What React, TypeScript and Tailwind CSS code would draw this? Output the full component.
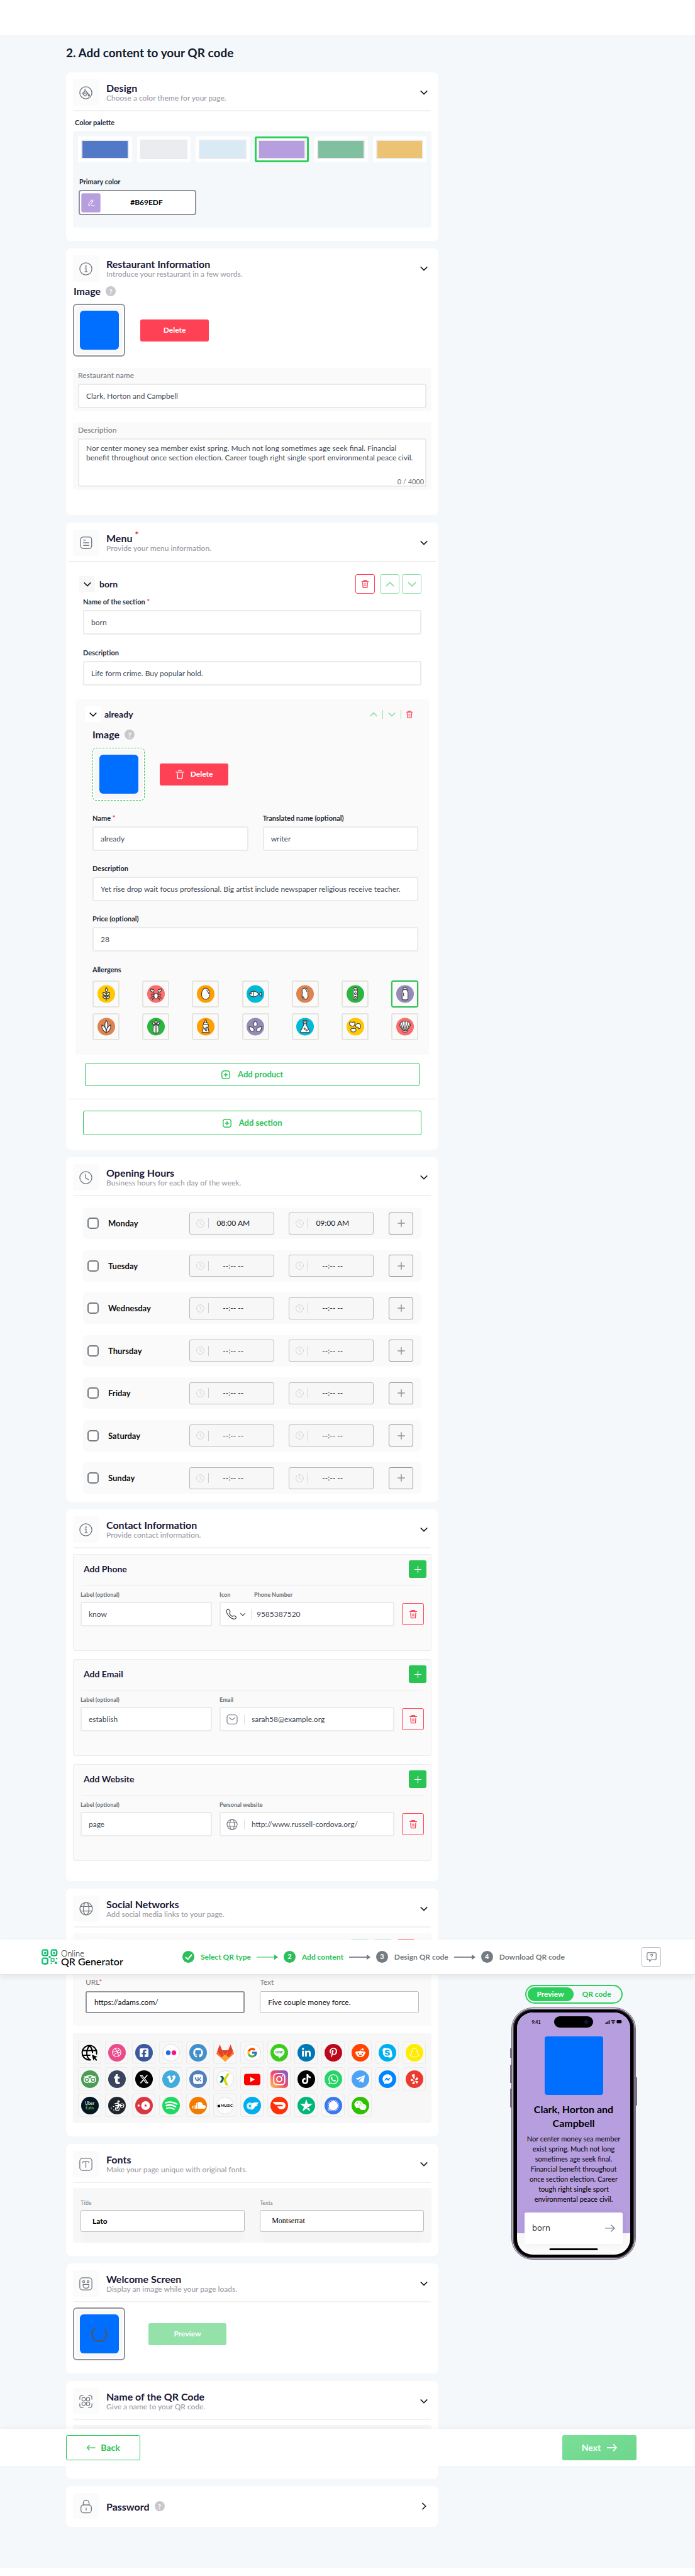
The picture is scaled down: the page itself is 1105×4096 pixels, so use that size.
import React from 'react';
import {
  FaApple, FaFacebookMessenger, FaGithub, FaInstagram, FaLinkedinIn, FaPinterestP, FaRedditAlien, FaSkype,
  FaSnapchat, FaSquareFacebook, FaTiktok, FaTumblr, FaVimeoV, FaVk, FaWeixin, FaWhatsapp, FaXTwitter,
  FaYelp, FaDribbble,
} from 'react-icons/fa6';
import { FaTelegramPlane } from 'react-icons/fa';
import { FcGoogle } from 'react-icons/fc';
import { SiDoordash, SiSignal, SiTripadvisor } from 'react-icons/si';

type Kids = { children?: React.ReactNode };

/* ---------- icons ---------- */

const line = { fill: 'none', stroke: 'currentColor', strokeLinecap: 'round', strokeLinejoin: 'round' } as const;

function Chevron({ dir = 'down', className = '' }: { dir?: 'down' | 'up' | 'right'; className?: string }) {
  const d = dir === 'down' ? 'M2 5l6 6 6-6' : dir === 'up' ? 'M2 11l6-6 6 6' : 'M5 2l6 6-6 6';
  return (
    <svg viewBox="0 0 16 16" className={className} {...line} strokeWidth="1.800" strokeLinecap="butt" strokeLinejoin="miter">
      <path d={d} />
    </svg>
  );
}

function Trash({ className = '' }: { className?: string }) {
  return (
    <svg viewBox="0 0 20 22" className={className} {...line} strokeWidth="2">
      <path d="M2 5h16M6.500 5V2.500h7V5M4 8l1 12h10l1-12M8 11h4M8 15h4" />
    </svg>
  );
}

function ClockIcon({ className = '' }: { className?: string }) {
  return (
    <svg viewBox="0 0 24 24" className={className} {...line} strokeWidth="1.500">
      <circle cx="12" cy="12" r="11" />
      <path d="M11.500 6v6.500l5 3" />
    </svg>
  );
}

function GlobeIcon({ className = '' }: { className?: string }) {
  return (
    <svg viewBox="0 0 24 24" className={className} {...line} strokeWidth="1.500">
      <circle cx="12" cy="12" r="10.800" />
      <path d="M2.500 8h19M2.500 16h19" />
      <ellipse cx="12" cy="12" rx="4.800" ry="10.800" />
    </svg>
  );
}

function InfoIcon({ className = '' }: { className?: string }) {
  return (
    <svg viewBox="0 0 24 24" className={className} {...line} strokeWidth="1.500">
      <circle cx="12" cy="12" r="11" />
      <path d="M10.500 10.500H12.500v6.500M10.500 17h4" />
      <circle cx="12.200" cy="7" r=".6" fill="currentColor" />
    </svg>
  );
}

function DesignIcon({ className = '' }: { className?: string }) {
  return (
    <svg viewBox="0 0 24 24" className={className} {...line} strokeWidth="1.600">
      <circle cx="12" cy="12" r="11" />
      <path d="M10.500 5.500v3M11 8l5 5-4.500 4.500a1 1 0 0 1-1.500 0L6.500 14a1 1 0 0 1 0-1.500zM6.500 12.700h9.500" />
      <path d="M17.500 14.500c1.500 2 1.500 3.500 0 3.500s-1.500-1.500 0-3.500z" fill="currentColor" />
    </svg>
  );
}

function MenuIcon({ className = '' }: { className?: string }) {
  return (
    <svg viewBox="0 0 24 24" className={className} {...line} strokeWidth="1.700">
      <rect x="1.500" y="1" width="21" height="22" rx="5" />
      <path d="M7 7h4M7 12h10M7 17h10" />
    </svg>
  );
}

function FontIcon({ className = '' }: { className?: string }) {
  return (
    <svg viewBox="0 0 24 24" className={className} {...line} strokeWidth="1.500">
      <rect x="1" y="1" width="22" height="22" rx="5" />
      <path d="M6.500 9c0-2 1-2.200 2-2.200h7c1.200 0 2 .4 2 2.200M12 7v10.500" />
    </svg>
  );
}

function SmileIcon({ className = '' }: { className?: string }) {
  return (
    <svg viewBox="0 0 24 24" className={className} {...line} strokeWidth="1.500">
      <rect x="1" y="1" width="22" height="22" rx="5" />
      <circle cx="8" cy="8" r="1.800" />
      <circle cx="16" cy="8" r="1.800" />
      <path d="M7 13h10.500v2c0 3-2 4.800-5.200 4.800S7 18 7 15z" />
    </svg>
  );
}

function QrScanIcon({ className = '' }: { className?: string }) {
  return (
    <svg viewBox="0 0 24 24" className={className} {...line} strokeWidth="1.500">
      <path d="M1 8V5q0-4 4-4h2M17 1h2q4 0 4 4v3M23 16v3q0 4-4 4h-2M7 23H5q-4 0-4-4v-3" />
      <rect x="5" y="5" width="6" height="6" rx="2" />
      <rect x="13" y="5" width="6" height="6" rx="2" />
      <rect x="5" y="13" width="6" height="6" rx="2" />
      <rect x="13" y="13" width="6" height="6" rx="2" />
    </svg>
  );
}

function LockIcon({ className = '' }: { className?: string }) {
  return (
    <svg viewBox="0 0 24 26" className={className} {...line} strokeWidth="1.600">
      <rect x="2" y="10" width="20" height="15" rx="5" />
      <path d="M6.500 10V6.500a5.500 5.500 0 0 1 11 0V10M12 16v4" />
    </svg>
  );
}

function Help() {
  return (
    <span className="inline-flex h-4 w-4 items-center justify-center rounded-full bg-[#c9c8ce] text-[11px] leading-none text-white">?</span>
  );
}

/* ---------- building blocks ---------- */

function Card({ children, className = '' }: Kids & { className?: string }) {
  return <section className={'rounded-lg bg-white px-[11px] ' + className}>{children}</section>;
}

function CardHead({ icon, title, sub, rule = 'soft', required, extra }: {
  icon: React.ReactNode; title: string; sub?: string; rule?: 'soft' | 'wide' | 'none'; required?: boolean; extra?: React.ReactNode;
}) {
  return (
    <>
      <header className="flex items-center pt-[11px]">
        <span className="flex h-[42px] w-[41px] shrink-0 items-center justify-center rounded bg-[#fbfbfc] text-[#757b82]">{icon}</span>
        <div className="ml-3 min-w-0 flex-1">
          <h2 className="flex items-center gap-2 text-[16px] leading-[17px] font-bold text-[#1c1836]">
            <span>
              {title}
              {required && <sup className="ml-1 text-[14px] leading-none text-[#e0162e]">*</sup>}
            </span>
            {extra}
          </h2>
          {sub && <p className="text-[12px] leading-4 font-medium text-[#9d9ba6]">{sub}</p>}
        </div>
        <button type="button" aria-label={'Toggle ' + title} className="flex h-6 w-6 items-center justify-center text-[#15142b]">
          <Chevron dir={sub ? 'down' : 'right'} className="h-3.5 w-3.5" />
        </button>
      </header>
      {rule === 'soft' && <div className="mx-px mt-[7px] h-0.5 bg-[#f1f1f2]" />}
      {rule === 'wide' && <div className="-mx-[7px] mt-2 h-px bg-[#e6e6e6]" />}
    </>
  );
}

const inputBox = 'block w-full min-w-0 rounded-[3px] border-2 border-[#ebebeb] bg-white px-[11px] text-[12px] text-[#444b57] outline-none';

function Field({ id, label, value, required, className = '' }: { id: string; label: string; value: string; required?: boolean; className?: string }) {
  return (
    <div className={'min-w-0 ' + className}>
      <label htmlFor={id} className="block text-[11px] leading-4 font-bold text-[#232a36]">
        {label}
        {required && <span className="text-[#ef3d4e]"> *</span>}
      </label>
      <input id={id} defaultValue={value} className={inputBox + ' mt-[5px] h-[39px]'} />
    </div>
  );
}

function ImageHead() {
  return (
    <div className="flex h-5 items-center gap-2 text-[16px] font-bold text-[#1c1836]">
      <h3>Image</h3>
      <Help />
    </div>
  );
}

function ImageBox({ dashed, children }: Kids & { dashed?: boolean }) {
  return (
    <div
      className={
        'flex h-[84px] w-[83px] items-center justify-center rounded-md bg-white p-0.5 ' +
        (dashed ? 'border border-dashed border-[#2ac455]' : 'border-2 border-[#93939b]')
      }
    >
      <div className="flex h-full w-full items-center justify-center rounded bg-[#f7f7f7]">
        <div className="flex h-[62px] w-[62px] items-center justify-center rounded-md bg-[#006eff]">{children}</div>
      </div>
    </div>
  );
}

/* ---------- design ---------- */

const swatches: [string, string][] = [
  ['Blue', 'bg-[#5279c7]'], ['Grey', 'bg-[#ebecf0]'], ['Sky', 'bg-[#d9eaf4]'],
  ['Purple', 'bg-[#b69edf]'], ['Green', 'bg-[#80c0a1]'], ['Amber', 'bg-[#ebc373]'],
];

function DesignCard() {
  return (
    <Card className="pb-[21px]">
      <CardHead icon={<DesignIcon className="h-[21px] w-[21px]" />} title="Design" sub="Choose a color theme for your page." />
      <h3 className="mt-2.5 ml-[3px] text-[11px] leading-4 font-bold text-[#232a36]">Color palette</h3>
      <div className="mt-[5px] rounded bg-[#f4f8fb] px-2 pt-[9px] pb-5">
        <div className="grid grid-cols-6 gap-2">
          {swatches.map(([name, color]) => (
            <button
              key={name}
              type="button"
              aria-label={name + ' palette'}
              aria-pressed={name === 'Purple'}
              className={'h-[41px] rounded-[3px] border-3 bg-white p-0.5 ' + (name === 'Purple' ? 'border-[#2bcf59]' : 'border-white')}
            >
              <span className={'block h-full w-full border-2 border-[#ebebec] ' + color} />
            </button>
          ))}
        </div>
        <label htmlFor="primary" className="mt-[23px] ml-0.5 block text-[11px] leading-4 font-bold text-[#232a36]">Primary color</label>
        <div className="mt-[5px] ml-px flex h-10 w-[187px] items-center rounded border-2 border-[#93939b] bg-white px-0.5">
          <span className="flex h-[31px] w-[31px] shrink-0 items-center justify-center rounded-[3px] border border-[#cbbfe0] bg-[#b69edf] text-white">
            <svg viewBox="0 0 16 16" className="h-3 w-3" {...line} strokeWidth="1.300">
              <path d="M9.500 2.500l3 2L6 13l-3.500 1.500.3-3.700zM8 4.500l3 2M8.500 14.500H15" />
            </svg>
          </span>
          <input id="primary" defaultValue="#B69EDF" className="w-full min-w-0 bg-transparent pr-[2px] text-center text-[12px] font-bold text-black outline-none" />
        </div>
      </div>
    </Card>
  );
}

/* ---------- restaurant ---------- */

function RestaurantCard() {
  return (
    <Card className="pb-10">
      <CardHead rule="none" icon={<InfoIcon className="h-[21px] w-[21px]" />} title="Restaurant Information" sub="Introduce your restaurant in a few words." />
      <div className="mt-[5px] ml-px"><ImageHead /></div>
      <div className="mt-2.5 flex items-center gap-6">
        <ImageBox />
        <button type="button" className="h-[35px] w-[109px] rounded-[3px] bg-[#ff4155] text-[12px] font-bold text-white">Delete</button>
      </div>
      <div className="mt-[18px] rounded bg-[#fafafa] px-2 pt-1 pb-[5px]">
        <label htmlFor="rname" className="block text-[12px] leading-4 font-medium text-[#7c8188]">Restaurant name</label>
        <input id="rname" defaultValue="Clark, Horton and Campbell" className={inputBox + ' mt-[5px] h-[39px]'} />
      </div>
      <div className="relative mt-[18px] rounded bg-[#fafafa] px-2 pt-1 pb-[5px]">
        <label htmlFor="rdesc" className="block text-[12px] leading-4 font-medium text-[#7c8188]">Description</label>
        <textarea
          id="rdesc"
          defaultValue="Nor center money sea member exist spring. Much not long sometimes age seek final. Financial benefit throughout once section election. Career tough right single sport environmental peace civil."
          className={inputBox + ' mt-[5px] h-[77px] resize-none py-1.5 leading-[15px]'}
        />
        <span className="absolute right-3 bottom-[7px] text-[11px] leading-3 text-[#6d6d72]">0 / 4000</span>
      </div>
    </Card>
  );
}

/* ---------- menu ---------- */

const ink = { fill: '#fff', stroke: '#3c3c3b', strokeWidth: 1.4, strokeLinejoin: 'round', strokeLinecap: 'round' } as const;

const allergens: { name: string; color: string; art: React.ReactNode }[] = [
  { name: 'Gluten', color: '#ffc800', art: <><path d="M18 14v17" /><path d="M18 5c3 3 3 7 0 9-3-2-3-6 0-9zM18 21c0-4-3-6-7-6 0 4 3 6 7 6zM18 21c0-4 3-6 7-6 0 4-3 6-7 6zM18 28c0-4-3-6-7-6 0 4 3 6 7 6zM18 28c0-4 3-6 7-6 0 4-3 6-7 6z" /></> },
  { name: 'Crustaceans', color: '#ff6b6d', art: <><path fill="none" d="M14 20l-5-2-1 3M13.500 23l-5 1-1 3M14 26l-3 2v2M22 20l5-2 1 3M22.500 23l5 1 1 3M22 26l3 2v2M15 18l-4-4M21 18l4-4" /><path d="M11 14c-4 0-5-4-3-7l2 3 3-2c2 3 1 6-2 6zM25 14c4 0 5-4 3-7l-2 3-3-2c-2 3-1 6 2 6zM18 17c4 0 4.500 3 4 6s-2 5-4 5-3.500-2-4-5 0-6 4-6z" /></> },
  { name: 'Eggs', color: '#ff9f00', art: <><path d="M18 6c5 0 8.500 7 8.500 12.500S23 29 18 29s-8.500-4.500-8.500-10.500S13 6 18 6z" /><path fill="none" d="M20 10c2 2 3.500 4 4 7" /></> },
  { name: 'Fish', color: '#00bbd8', art: <><path d="M5 18c4-7 13-8 20 0l5-4v9l-5-5c-7 8-16 7-20 0z" /><path fill="none" d="M13 13c2 3 2 7 0 10" /><circle cx="9.500" cy="17" r="1.300" /></> },
  { name: 'Peanuts', color: '#df8350', art: <><path d="M18 6c5 0 7 4 6 7-1 3-1 4 0 7 1 4-1 9-6 9s-7-5-6-9c1-3 1-4 0-7-1-3 1-7 6-7z" /><path fill="none" d="M19 9c2 0 3 2 2.500 4M14 23c0 2 1 3.500 3 3.500" /></> },
  { name: 'Soy', color: '#2bb63f', art: <><path d="M18 5c4 0 5 3 4 6 1 2 1 3 0 5 1 2 1 3 0 5 1 4 0 9-4 9s-5-5-4-9c-1-2-1-3 0-5-1-2-1-3 0-5-1-3 0-6 4-6z" /><circle cx="18" cy="10" r="2" /><circle cx="18" cy="17.500" r="2" /><circle cx="18" cy="25" r="2" /></> },
  { name: 'Milk', color: '#948bb7', art: <><path d="M14.500 9h7c0 3 2.500 3 2.500 6v12c0 2-1 3-3 3h-6c-2 0-3-1-3-3V15c0-3 2.500-3 2.500-6z" /><rect x="14" y="5.500" width="8" height="3.500" rx="1" /><path fill="none" d="M15 16v6" /></> },
  { name: 'Nuts', color: '#df8350', art: <><path d="M18 5c4 5 4 14 0 21-4-7-4-16 0-21z" /><path d="M9 14c6 3 9 9 9 16-6-2-10-8-9-16zM27 14c-6 3-9 9-9 16 6-2 10-8 9-16z" /></> },
  { name: 'Celery', color: '#2bb63f', art: <><path d="M18 4c3 3 2 6 0 9-2-3-3-6 0-9zM10 8c4 0 6 3 6 6-4 0-6-2-6-6zM26 8c-4 0-6 3-6 6 4 0 6-2 6-6z" /><path d="M13 15h3.500v16c-4 0-5-3-4.500-8zM23 15h-3.500v16c4 0 5-3 4.500-8zM16.500 14h3v17h-3z" /></> },
  { name: 'Mustard', color: '#ff9f00', art: <><path d="M17 4h2l1 6h-4zM13.500 10h9v3h-9zM13 13h10c2 4-1 5 0 8l2 9H11l2-9c1-3-2-4 0-8z" /><circle cx="16" cy="22" r="1.300" /><circle cx="20" cy="20" r="1.300" /><circle cx="19" cy="25" r="1.500" /></> },
  { name: 'Sesame', color: '#948bb7', art: <path d="M18 6c3 3 4 5 4 7 0 3-2 4-4 4s-4-1-4-4c0-2 1-4 4-7zM5 18c5 0 9 2 10 5s0 5-3 5c-4 0-7-5-7-10zM31 18c-5 0-9 2-10 5s0 5 3 5c4 0 7-5 7-10z" /> },
  { name: 'Sulphites', color: '#00bbd8', art: <><path d="M15 8h6v7l6 12c1 2 0 3-1 3H10c-1 0-2-1-1-3l6-12z" /><rect x="14" y="5" width="8" height="3" rx="1" /><path fill="none" d="M15 12h6" /><circle cx="17" cy="22" r="1.300" /><circle cx="21" cy="25" r="1.500" /></> },
  { name: 'Lupin', color: '#ffc800', art: <><path d="M7 8c3 0 4 3 8 0 4 2 2 9-3 9s-8-5-5-9zM20 13c4-3 9-1 9 4 0 4-3 6-5 5 1-3-2-4-4-3-2-1-2-4 0-6zM10 21c3 1 5 1 8 0 3 4 1 8-4 8s-7-4-4-8z" /></> },
  { name: 'Molluscs', color: '#ff6b6d', art: <><path d="M18 7c6-1 11 3 11 8-1 4-4 7-7 10h-8c-3-3-6-6-7-10C7 10 12 6 18 7z" /><path fill="none" d="M18 7v18M12.500 8.500L16 25M23.500 8.500L20 25M8.500 12L14 25M27.500 12L22 25" /><rect x="13.500" y="26" width="9" height="3" rx="1.500" /></> },
];

function MenuCard() {
  return (
    <Card className="pb-[23px]">
      <CardHead rule="wide" required icon={<MenuIcon className="h-5 w-5" />} title="Menu" sub="Provide your menu information." />
      <div className="mx-4 mt-5">
        <div className="-ml-1.5 flex items-center">
          <button type="button" aria-label="Collapse section" className="flex h-[25px] w-[25px] items-center justify-center bg-[#f7f7f7] text-[#15142b]">
            <Chevron className="h-3.5 w-3.5" />
          </button>
          <h3 className="ml-[7px] flex-1 text-[14px] font-bold text-[#1c1836]">born</h3>
          <button type="button" aria-label="Delete section" className="flex h-[31px] w-[31px] items-center justify-center rounded-[3px] border border-[#ff4155] text-[#ff4155]"><Trash className="h-[15px] w-[13px]" /></button>
          <button type="button" aria-label="Move section up" className="ml-2 flex h-[31px] w-[31px] items-center justify-center rounded-[3px] border border-[#92dfa8] text-[#92dfa8]"><Chevron dir="up" className="h-4 w-4" /></button>
          <button type="button" aria-label="Move section down" className="ml-1 flex h-[31px] w-[31px] items-center justify-center rounded-[3px] border border-[#92dfa8] text-[#92dfa8]"><Chevron className="h-4 w-4" /></button>
        </div>
        <Field id="section-name" label="Name of the section" required value="born" className="mt-[5px]" />
        <Field id="section-desc" label="Description" value="Life form crime. Buy popular hold." className="mt-[21px]" />
      </div>
      <div className="mx-1 mt-[22px] rounded bg-[#fafafa] pt-[11px] pr-[17px] pb-[23px] pl-[27px]">
        <div className="-ml-3 flex items-center">
          <button type="button" aria-label="Collapse product" className="flex h-[25px] w-[25px] items-center justify-center bg-white text-[#15142b]">
            <Chevron className="h-3.5 w-3.5" />
          </button>
          <h3 className="ml-1.5 flex-1 text-[14px] leading-5 font-bold text-[#1c1836]">already</h3>
          <div className="mr-2 flex items-center gap-[7px] text-[#92dfa8]">
            <button type="button" aria-label="Move product up"><Chevron dir="up" className="block h-3.5 w-3.5" /></button>
            <span className="h-3.5 w-px bg-[#92dfa8]" />
            <button type="button" aria-label="Move product down"><Chevron className="block h-3.5 w-3.5" /></button>
            <span className="h-3.5 w-px bg-[#92dfa8]" />
            <button type="button" aria-label="Delete product" className="text-[#ff4155]"><Trash className="block h-3.5 w-3" /></button>
          </div>
        </div>
        <div className="mt-2.5"><ImageHead /></div>
        <div className="mt-[11px] flex items-center gap-6">
          <ImageBox dashed />
          <button type="button" className="flex h-[35px] w-[109px] items-center justify-center gap-2.5 rounded-[3px] bg-[#ff4155] text-[12px] font-bold text-white">
            <svg viewBox="0 0 18 20" className="h-[15px] w-[14px]" {...line} strokeWidth="2"><path d="M1 5h16M6 1h6M3.500 8l1 11h9l1-11" /></svg>
            Delete
          </button>
        </div>
        <div className="mt-5 grid grid-cols-2 gap-[23px]">
          <Field id="p-name" label="Name" required value="already" />
          <Field id="p-trans" label="Translated name (optional)" value="writer" />
        </div>
        <Field id="p-desc" label="Description" value="Yet rise drop wait focus professional. Big artist include newspaper religious receive teacher." className="mt-5" />
        <Field id="p-price" label="Price (optional)" value="28" className="mt-5" />
        <h4 className="mt-[21px] text-[11px] leading-4 font-bold text-[#232a36]">Allergens</h4>
        <div className="mt-[9px] grid grid-cols-[repeat(7,43px)] justify-between gap-y-[9px]">
          {allergens.map((a) => (
            <button
              key={a.name}
              type="button"
              aria-label={a.name}
              aria-pressed={a.name === 'Milk'}
              className={'flex h-[43px] w-[43px] items-center justify-center rounded-[3px] border-2 ' + (a.name === 'Milk' ? 'border-[#2ac455] outline-1 outline-[#e5e5de]' : 'border-[#e5e5de]')}
            >
              <svg viewBox="0 0 36 36" className="h-[29px] w-[28px]" {...ink}>
                <circle cx="18" cy="18" r="18" fill={a.color} stroke="none" />
                {a.art}
              </svg>
            </button>
          ))}
        </div>
      </div>
      <AddButton className="mx-[19px] mt-[13px] h-[37px]">Add product</AddButton>
      <div className="-mx-[7px] mt-5 h-px bg-[#e6e6e6]" />
      <AddButton className="mx-4 mt-[18px] h-[39px]">Add section</AddButton>
    </Card>
  );
}

function AddButton({ children, className }: Kids & { className: string }) {
  return (
    <div className={'flex ' + className}>
      <button type="button" className="flex flex-1 items-center justify-center gap-3 rounded-[3px] border border-[#2ac455] text-[13px] font-bold text-[#2ac455]">
        <svg viewBox="0 0 18 18" className="h-3.5 w-3.5" {...line} strokeWidth="1.900"><rect x="1" y="1" width="16" height="16" rx="4.500" /><path d="M9 5.500v7M5.500 9h7" /></svg>
        {children}
      </button>
    </div>
  );
}

/* ---------- hours ---------- */

function TimeBox({ label, value }: { label: string; value?: string }) {
  return (
    <div className="flex h-[35px] w-[135px] items-center rounded-[3px] border border-[#b9b9bd] bg-[#f7f7f8] pl-2.5">
      <ClockIcon className="h-[13px] w-[13px] shrink-0 text-[#cdced2]" />
      <span className="ml-1.5 h-4 w-px shrink-0 bg-[#cfcfd3]" />
      <input aria-label={label} defaultValue={value ?? '--:-- --'} className="w-full min-w-0 bg-transparent pr-[26px] text-center text-[12px] text-[#111] outline-none" />
    </div>
  );
}

function HoursCard() {
  const days = ['Monday', 'Tuesday', 'Wednesday', 'Thursday', 'Friday', 'Saturday', 'Sunday'];
  return (
    <Card className="pb-[13px]">
      <CardHead icon={<ClockIcon className="h-[21px] w-[21px]" />} title="Opening Hours" sub="Business hours for each day of the week." />
      <div className="mx-4 mt-[18px] grid h-[455px] content-between">
        {days.map((day) => (
          <div key={day} className="flex h-[50px] items-center rounded-md bg-[#fafafa] pr-[13px] pl-[7px]">
            <input id={day} type="checkbox" className="h-[18px] w-[18px] appearance-none rounded-[5px] border-2 border-[#757b82] bg-white" />
            <label htmlFor={day} className="ml-[15px] flex-1 text-[13px] leading-4 font-bold text-[#111]">{day}</label>
            <TimeBox label={day + ' opening time'} value={day === 'Monday' ? '08:00 AM' : undefined} />
            <span className="w-[23px]" />
            <TimeBox label={day + ' closing time'} value={day === 'Monday' ? '09:00 AM' : undefined} />
            <button type="button" aria-label={'Add hours for ' + day} className="ml-6 flex h-[35px] w-[39px] items-center justify-center rounded-[3px] border border-[#93939b] bg-[#f7f7f8] text-[#93939b]">
              <svg viewBox="0 0 12 12" className="h-3 w-3" {...line} strokeWidth="1.600"><path d="M6 .8v10.400M.8 6h10.400" /></svg>
            </button>
          </div>
        ))}
      </div>
    </Card>
  );
}

/* ---------- contact ---------- */

function ContactPanel({ id, title, label, valueLabel, value, icon, phone, className }: {
  id: string; title: string; label: string; valueLabel: string; value: string; icon: React.ReactNode; phone?: boolean; className: string;
}) {
  const small = 'block text-[9px] leading-[14px] font-black text-[#757b82]';
  return (
    <div className={'h-[154px] rounded-[3px] border border-[#ececec] bg-[#fafafa] pt-[9px] pr-[7px] pl-3 ' + className}>
      <div className="flex items-center pl-1">
        <h3 className="flex-1 text-[14px] leading-5 font-bold text-[#1c1836]">{title}</h3>
        <button type="button" aria-label={title} className="flex h-7 w-7 items-center justify-center rounded-[3px] bg-[#2ac455] text-white">
          <svg viewBox="0 0 12 12" className="h-[11px] w-[11px]" {...line} strokeWidth="1.300"><path d="M6 .5v11M.5 6h11" /></svg>
        </button>
      </div>
      <div className="mt-[11px] mr-[5px] ml-px h-px bg-[#ebebec]" />
      <div className="mt-2 mr-1 -ml-px flex items-end">
        <div className="min-w-0 flex-[209]">
          <label htmlFor={id + '-label'} className={small}>Label (optional)</label>
          <input id={id + '-label'} defaultValue={label} className={inputBox + ' mt-1 h-[39px]'} />
        </div>
        <div className="ml-3 min-w-0 flex-[278]">
          <div className="flex">
            {phone && <span className={small + ' w-[55px]'}>Icon</span>}
            <label htmlFor={id + '-value'} className={small}>{valueLabel}</label>
          </div>
          <div className={'mt-1 flex h-[39px] items-center rounded-[3px] border-2 border-[#ebebeb] bg-white ' + (phone ? 'pl-2' : 'pl-[9px]')}>
            {icon}
            <span className={'h-4 w-px bg-[#dededf] ' + (phone ? 'ml-2' : 'ml-2.5')} />
            <input id={id + '-value'} defaultValue={value} className={'w-full min-w-0 bg-transparent text-[12px] text-[#444b57] outline-none ' + (phone ? 'pl-2' : 'pl-[11px]')} />
          </div>
        </div>
        <button type="button" aria-label={'Remove ' + valueLabel} className="mb-0.5 ml-3 flex h-[35px] w-[35px] shrink-0 items-center justify-center rounded-[3px] border border-[#ff4155] text-[#ff4155]">
          <Trash className="h-[15px] w-[14px]" />
        </button>
      </div>
    </div>
  );
}

function ContactCard() {
  return (
    <Card className="pb-8">
      <CardHead icon={<InfoIcon className="h-[21px] w-[21px]" />} title="Contact Information" sub="Provide contact information." />
      <ContactPanel
        className="mt-[9px]" id="phone" title="Add Phone" label="know" valueLabel="Phone Number" value="9585387520" phone
        icon={
          <button type="button" aria-label="Choose icon" className="flex shrink-0 items-center gap-[5px] text-[#3e4653]">
            <svg viewBox="0 0 24 24" className="h-[17px] w-[17px]" {...line} strokeWidth="1.700">
              <path d="M2 3.500C3.500 1 6 .5 7 2l2.500 4c.8 1.500-.2 2.500-1.200 3.500-.8 1 1 3.500 2.500 5s4 3.200 5 2.500c1-1 2-2 3.500-1.200l3 2c2 1.200 1 3.500-1.500 5-3 1.500-9-1.500-13-5.500S.5 7 2 3.500z" />
            </svg>
            <Chevron className="h-2.5 w-2.5" />
          </button>
        }
      />
      <ContactPanel
        className="mt-[13px]" id="email" title="Add Email" label="establish" valueLabel="Email" value="sarah58@example.org"
        icon={
          <svg viewBox="0 0 24 22" className="h-4 w-[18px] shrink-0 text-[#757b82]" {...line} strokeWidth="1.600">
            <rect x="1" y="1" width="22" height="20" rx="5" /><path d="M5.500 7l6.500 5 6.500-5" />
          </svg>
        }
      />
      <ContactPanel
        className="mt-[13px]" id="website" title="Add Website" label="page" valueLabel="Personal website" value="http://www.russell-cordova.org/"
        icon={<GlobeIcon className="h-[18px] w-[18px] shrink-0 text-[#757b82]" />}
      />
    </Card>
  );
}

/* ---------- social ---------- */

type Social = { name: string; bg?: string; art: React.ReactNode };
const ring = 'bg-[#fdfdfd] border border-[#e0e0e0]';

const socials: Social[] = [
  { name: 'Website', art: <svg viewBox="0 0 28 28" className="h-7 w-7" {...line} stroke="#000" strokeWidth="2"><path d="M24.500 16A11.500 11.500 0 1 0 15 25.300M2 10.500h22M2 18h12M13.500 3c-6 6-6 17 0 22M13.500 3c3.500 3.500 4.500 7 4.500 11" /><path d="M17 17l9 3.500-3.500 1.500 3 3.500-1.500 1.500-3-3.500-1.500 3z" fill="#000" stroke="none" /></svg> },
  { name: 'Dribbble', bg: 'bg-[#ea4c8a]', art: <FaDribbble className="h-[15px] w-[15px] text-white" /> },
  { name: 'Facebook', bg: 'bg-[#3a589b]', art: <FaSquareFacebook className="h-4 w-4 text-white" /> },
  { name: 'Flickr', bg: ring, art: <svg viewBox="0 0 28 28" className="h-7 w-7 shrink-0"><circle cx="9.500" cy="14" r="3.700" fill="#2369df" /><circle cx="18.500" cy="14" r="3.700" fill="#ff0f86" /></svg> },
  { name: 'GitHub', bg: 'bg-[#4290cb]', art: <FaGithub className="h-4 w-4 text-white" /> },
  { name: 'GitLab', art: <svg viewBox="0 0 28 28" className="h-7 w-7"><path d="M14 28L0 15.500 5.500 1l3.500 9h10l3.500-9L28 15.500z" fill="#fc6d26" /><path d="M5.500 1L1.700 11.500 14 28 9 10zM22.500 1l3.800 10.500L14 28l5-18zM9 10h10l-5 9z" fill="#e24329" /><path d="M14 28l-6.500-6L14 17l6.500 5z" fill="#fca326" /></svg> },
  { name: 'Google', bg: ring, art: <FcGoogle className="h-[18px] w-[18px]" /> },
  { name: 'LINE', bg: 'bg-[#3ccc1c]', art: <svg viewBox="0 0 28 28" className="h-7 w-7 shrink-0"><path d="M14 6c5 0 8.500 3 8.500 6.800C22.500 17 17 20.500 14 22.500c-.5 0-.3-1.500-.5-2.500-4.500-.3-8-3.200-8-7.200S9 6 14 6z" fill="#fff" /><text x="14" y="15" textAnchor="middle" fontSize="5.500" fontWeight="800" fill="#3aae3c">LINE</text></svg> },
  { name: 'LinkedIn', bg: 'bg-[#0077b5]', art: <FaLinkedinIn className="h-4 w-4 text-white" /> },
  { name: 'Pinterest', bg: 'bg-[#bd081b]', art: <FaPinterestP className="h-4 w-4 text-white" /> },
  { name: 'Reddit', bg: 'bg-[#ff4500]', art: <FaRedditAlien className="h-4 w-4 text-white" /> },
  { name: 'Skype', bg: 'bg-[#00aff2]', art: <FaSkype className="h-[18px] w-[18px] text-white" /> },
  { name: 'Snapchat', bg: 'bg-[#ffec00]', art: <FaSnapchat className="h-4 w-4 text-white" /> },
  { name: 'Tripadvisor', bg: 'bg-[#4b9c55]', art: <SiTripadvisor className="h-5 w-5 text-white" /> },
  { name: 'Tumblr', bg: 'bg-[#3c435f]', art: <FaTumblr className="h-4 w-4 text-white" /> },
  { name: 'X', bg: 'bg-black', art: <FaXTwitter className="h-4 w-4 text-white" /> },
  { name: 'Vimeo', bg: 'bg-[#42addc]', art: <FaVimeoV className="h-4 w-4 text-white" /> },
  { name: 'VK', bg: 'bg-[#5181b8]', art: <FaVk className="h-[18px] w-[18px] text-white" /> },
  { name: 'Xing', bg: ring, art: <svg viewBox="0 0 28 28" className="h-7 w-7 shrink-0"><path d="M6 9h4l3 4.500-4 6H5l4-6z" fill="#0b6166" /><path d="M17.500 5H21l-6 10 4 9h-4l-4-9z" fill="#d0d900" /></svg> },
  { name: 'YouTube', art: <svg viewBox="0 0 28 28" className="h-7 w-7"><rect x="1" y="5.500" width="26" height="18" rx="4" fill="#f00" /><path d="M11 10.500l7 4-7 4z" fill="#fff" /></svg> },
  { name: 'Instagram', art: <span className="flex h-7 w-7 items-center justify-center rounded-md bg-linear-to-tr from-[#ffc247] via-[#f0426a] to-[#6a50d8]"><FaInstagram className="h-[22px] w-[22px] text-white" /></span> },
  { name: 'TikTok', bg: 'bg-black', art: <FaTiktok className="h-4 w-4 text-white" /> },
  { name: 'WhatsApp', bg: 'bg-[#27d467]', art: <FaWhatsapp className="h-[18px] w-[18px] text-white" /> },
  { name: 'Telegram', bg: 'bg-[#4fa3f7]', art: <FaTelegramPlane className="h-4 w-4 text-white" /> },
  { name: 'Messenger', bg: 'bg-[#0084ff]', art: <FaFacebookMessenger className="h-4 w-4 text-white" /> },
  { name: 'Yelp', bg: 'bg-[#eb3a30]', art: <FaYelp className="h-4 w-4 text-white" /> },
  { name: 'Uber Eats', bg: 'bg-[#031722]', art: <span className="text-center text-[7px] leading-[7px] text-white">Uber<br /><span className="font-bold text-[#5fb246]">Eats</span></span> },
  { name: 'Postmates', bg: 'bg-[#20242d]', art: <svg viewBox="0 0 28 28" className="h-7 w-7 shrink-0" {...line} stroke="#fff" strokeWidth="1.200"><circle cx="14.500" cy="19" r="3" /><circle cx="22" cy="14" r="3" /><path d="M11 11l4-1 4 4 3 0M15 10l2 4-3 5M12 14l5 0" strokeWidth="1.800" /><circle cx="16.500" cy="7.500" r="1.200" fill="#fff" /><path d="M4.500 18h1M8 15.500h1M8.500 21h1" /></svg> },
  { name: 'OpenTable', bg: 'bg-[#da3743]', art: <svg viewBox="0 0 28 28" className="h-7 w-7 shrink-0"><circle cx="5.500" cy="14" r="1.800" fill="#fff" /><circle cx="16.500" cy="14" r="7" fill="#fff" /><circle cx="16.500" cy="14" r="1.800" fill="#da3743" /></svg> },
  { name: 'Spotify', bg: 'bg-[#1fd960]', art: <svg viewBox="0 0 28 28" className="h-7 w-7 shrink-0" {...line} stroke="#fff" strokeWidth="2.500"><path d="M5.500 9.500c6-1.500 12.500-1 17.500 2M6.500 14c5-1.500 10.500-.8 14.500 1.800" /><path d="M7 18.300c4-1.200 8.500-.6 12 1.500" strokeWidth="2" /></svg> },
  { name: 'SoundCloud', bg: 'bg-[#f37c00]', art: <svg viewBox="0 0 28 28" className="h-7 w-7 shrink-0"><path d="M13 9c4-2 8 0 8.500 4 2.500-.5 4.500 1 4.500 3s-1.500 3-3 3H13z" fill="#fff" /><path d="M5.500 15v3.500M7.500 13v6M9.500 13.500v5.500M11.500 10v9" stroke="#fff" strokeWidth="1.200" /></svg> },
  { name: 'Apple Music', bg: ring, art: <span className="flex items-center text-[6px] font-bold text-black"><FaApple className="h-1.5 w-1.5" />MUSIC</span> },
  { name: 'OnlyFans', bg: 'bg-[#00aeef]', art: <svg viewBox="0 0 28 28" className="h-7 w-7 shrink-0"><path d="M10.500 9a5.500 5.500 0 1 0 0 11 5.500 5.500 0 0 0 0-11zm0 3.800a1.700 1.700 0 1 1 0 3.400 1.700 1.700 0 0 1 0-3.400z" fill="#c5ecfb" /><path d="M13 12c1-2 3-3 5-3h6c-.5 2-2 3-4 3.500h3c-.8 2-2.300 3-4.500 3-1 3-3 5-7 5 3-3 1-5 1.500-8.500z" fill="#fff" /></svg> },
  { name: 'DoorDash', bg: 'bg-[#ff3008]', art: <SiDoordash className="h-5 w-5 text-white" /> },
  { name: 'Trustpilot', bg: 'bg-[#00b67a]', art: <svg viewBox="0 0 28 28" className="h-7 w-7 shrink-0"><path d="M14 4l2.400 7.300H24l-6.200 4.600 2.400 7.300L14 18.700l-6.200 4.500 2.400-7.300L4 11.300h7.600z" fill="#fff" /><path d="M14 18.700l4.300-1.200-.5-1.600z" fill="#005128" /></svg> },
  { name: 'Signal', bg: 'bg-[#3a76f0]', art: <SiSignal className="h-[18px] w-[18px] text-white" /> },
  { name: 'WeChat', bg: 'bg-[#2dc100]', art: <FaWeixin className="h-5 w-5 text-white" /> },
];

function SocialCard() {
  const outline = 'h-[35px] w-full rounded-[3px] bg-white px-3 text-[12px] text-[#111] outline-none ';
  return (
    <Card className="pb-[21px]">
      <CardHead icon={<GlobeIcon className="h-[22px] w-[22px]" />} title="Social Networks" sub="Add social media links to your page." />
      <div className="mt-[9px] rounded bg-[#fafafa] px-5 pt-[9px] pb-5">
        <div className="flex h-[25px] gap-2">
          <span className="h-[25px] w-9 bg-white" />
          <span className="flex-1" />
          <span className="h-[25px] w-[29px] rounded-[3px] border border-[#bfe8ca]" />
          <span className="h-[25px] w-[29px] rounded-[3px] border border-[#bfe8ca]" />
          <span className="mr-1.5 h-[25px] w-[29px] rounded-[3px] border border-[#ff6b7b]" />
        </div>
        <div className="mt-9 grid grid-cols-2 gap-6">
          <div>
            <label htmlFor="url" className="block text-[12px] leading-4 text-[#757b82]">URL<span className="text-[#ef3d4e]">*</span></label>
            <input id="url" defaultValue="https://adams.com/" className={outline + 'mt-1.5 block border-2 border-[#93939b]'} />
          </div>
          <div>
            <label htmlFor="url-text" className="block text-[12px] leading-4 text-[#757b82]">Text</label>
            <input id="url-text" defaultValue="Five couple money force." className={outline + 'mt-1.5 block border border-[#b9b9bd]'} />
          </div>
        </div>
      </div>
      <div className="mt-3 rounded bg-[#f7f7f7] px-2 pt-3 pb-2.5">
        <div className="flex flex-wrap gap-x-1.5 gap-y-[5px]">
          {socials.map((s) => (
            <button key={s.name} type="button" aria-label={s.name} className="flex h-[37px] w-[37px] items-center justify-center rounded border border-[#ebebeb]">
              {s.bg ? <span className={'flex h-7 w-7 items-center justify-center overflow-hidden rounded-full ' + s.bg}>{s.art}</span> : s.art}
            </button>
          ))}
        </div>
      </div>
    </Card>
  );
}

/* ---------- remaining cards ---------- */

function FontsCard() {
  const box = 'mt-[5px] block h-[35px] w-full rounded-[3px] border border-[#b9b9bd] bg-white px-[18px] text-black shadow-[0_20px_12px_-4px_rgba(0,0,0,0.02)] outline-none ';
  return (
    <Card className="pb-[21px]">
      <CardHead icon={<FontIcon className="h-[21px] w-[21px]" />} title="Fonts" sub="Make your page unique with original fonts." />
      <div className="mt-2 grid grid-cols-2 gap-6 rounded bg-[#f7f7f7] px-3 pt-[18px] pb-[17px]">
        <div>
          <label htmlFor="font-title" className="block text-[9px] leading-3 text-[#757b82]">Title</label>
          <input id="font-title" defaultValue="Lato" className={box + 'text-[12px] font-bold'} />
        </div>
        <div>
          <label htmlFor="font-texts" className="block text-[9px] leading-3 text-[#757b82]">Texts</label>
          <input id="font-texts" defaultValue="Montserrat" className={box + "font-['Liberation_Serif',serif] text-[12px]"} />
        </div>
      </div>
    </Card>
  );
}

function WelcomeCard() {
  return (
    <Card className="pb-[21px]">
      <CardHead icon={<SmileIcon className="h-[21px] w-[21px]" />} title="Welcome Screen" sub="Display an image while your page loads." />
      <div className="mt-2 flex items-center gap-[37px]">
        <ImageBox>
          <svg viewBox="0 0 26 26" className="h-[26px] w-[26px]" fill="none" stroke="#4f5765" strokeWidth="2.500"><path d="M7 3.500a11.500 11.500 0 1 0 14 2" /></svg>
        </ImageBox>
        <button type="button" className="h-[35px] w-[124px] rounded-[3px] bg-[#94e1aa] text-[12px] font-bold text-white">Preview</button>
      </div>
    </Card>
  );
}

/* ---------- top bar, preview, footer ---------- */

function Step({ n, label, tone }: { n: React.ReactNode; label: string; tone: 'on' | 'off' }) {
  return (
    <li className={'flex items-center gap-2.5 text-[12px] font-bold whitespace-nowrap ' + (tone === 'on' ? 'text-[#2ac455]' : 'text-[#757b82]')}>
      <span className={'flex h-[19px] w-[19px] items-center justify-center rounded-full text-[11px] text-white ' + (tone === 'on' ? 'bg-[#2abf5a]' : 'bg-[#757b82]')}>{n}</span>
      {label}
    </li>
  );
}

function StepArrow({ color, head }: { color: string; head: string }) {
  return (
    <li aria-hidden="true">
      <svg viewBox="0 0 34 10" className="h-2.5 w-[34px]"><path d="M0 5h28" stroke={color} strokeWidth="1" /><path d="M28 .8l6 4.200-6 4.200z" fill={head} /></svg>
    </li>
  );
}

function TopBar() {
  return (
    <header className="absolute inset-x-0 top-[3084px] flex h-14 items-center border-b border-[#e3e5e7] bg-white pr-[54px] pl-[66px] shadow-[0_4px_10px_rgba(0,0,0,0.07)]">
      <a href="#" className="flex w-[133px] items-center gap-[5px] text-black">
        <svg viewBox="0 0 34 32" className="h-[25px] w-[26px] shrink-0">
          <defs><linearGradient id="logo" x1="0" y1="0" x2="1" y2="1"><stop offset="0" stopColor="#1ad67a" /><stop offset="1" stopColor="#1fa877" /></linearGradient></defs>
          <g fill="none" stroke="url(#logo)" strokeWidth="3.300">
            <rect x="1.700" y="1.700" width="11" height="11.500" rx="3" /><rect x="20.500" y="1.700" width="11" height="11.500" rx="3" /><rect x="1.700" y="19" width="11" height="11.500" rx="3" />
          </g>
          <g fill="#1dbb78"><path d="M5.500 5.800h4v4h-4zM24 5.800h4v4h-4zM15 14h4v4h-4zM19 28h3v3h-3zM30 18h3v3h-3zM27.500 26h5v5h-5z" /></g>
          <rect x="20" y="19.500" width="6" height="6" fill="none" stroke="#1dbb78" strokeWidth="2" />
        </svg>
        <span className="pt-px whitespace-nowrap">
          <span className="block text-[13px] leading-3 font-light">Online</span>
          <span className="block text-[16px] leading-[13px] font-medium">QR Generator</span>
        </span>
      </a>
      <ol className="ml-[91px] flex items-center gap-[9px]">
        <Step tone="on" label="Select QR type" n={<svg viewBox="0 0 12 12" className="h-3 w-3" {...line} strokeWidth="2"><path d="M1.500 6.500l3 3 6-7" /></svg>} />
        <StepArrow color="#2ac455" head="#2ac455" />
        <Step tone="on" label="Add content" n="2" />
        <StepArrow color="#1c1836" head="#757b82" />
        <Step tone="off" label="Design QR code" n="3" />
        <StepArrow color="#1c1836" head="#757b82" />
        <Step tone="off" label="Download QR code" n="4" />
      </ol>
      <button type="button" aria-label="Help" className="ml-auto flex h-[31px] w-[31px] items-center justify-center rounded-[3px] border border-[#b9b9bd] text-[#757b82]">
        <svg viewBox="0 0 20 20" className="h-4 w-4" {...line} strokeWidth="1.500"><path d="M3 1h14q2 0 2 2v10q0 2-2 2H9l-3 3.500V15H3q-2 0-2-2V3q0-2 2-2zM8 6c0-2.500 4-2.500 4 0 0 1.500-2 1.500-2 3M10 11.500v.2" /></svg>
      </button>
    </header>
  );
}

function PhonePreview() {
  return (
    <aside className="mt-[3100px] flex w-[200px] flex-col items-center self-start">
      <div className="flex h-[30px] w-[155px] items-center rounded-full border-2 border-[#2bcf59] p-0.5">
        <button type="button" className="h-full w-[73px] rounded-full bg-[#2bcf59] text-[12px] font-bold text-white">Preview</button>
        <button type="button" className="flex-1 text-[12px] font-bold text-[#2ac455]">QR code</button>
      </div>
      <div className="relative mt-1.5 w-[198px] rounded-[34px] border border-[#6f6378] bg-[#e2dee6] p-px">
        <span className="absolute top-[64px] -left-[3px] h-[15px] w-[2px] bg-[#7a6d80]" />
        <span className="absolute top-[90px] -left-[3px] h-[29px] w-[2px] bg-[#7a6d80]" />
        <span className="absolute top-[128px] -left-[3px] h-[30px] w-[2px] bg-[#7a6d80]" />
        <span className="absolute top-[110px] -right-[3px] h-[45px] w-[2px] bg-[#7a6d80]" />
        <div className="rounded-[32px] border-2 border-[#4a4052] bg-black px-[5px] py-1">
          <div className="relative h-[385px] overflow-hidden rounded-[25px] bg-[#fafafa]">
            <div className="flex h-[351px] flex-col items-center bg-[#b69edf] px-3 pt-1.5 text-center text-black">
              <div className="grid h-[18px] w-full grid-cols-[1fr_62px_1fr] items-center">
                <span className="mr-2.5 text-[7px] font-bold">9:41</span>
                <span className="flex h-[18px] items-center justify-end rounded-full bg-black pr-2"><span className="h-1.5 w-1.5 rounded-full bg-[#0b1442]" /></span>
                <svg viewBox="0 0 36 8" className="ml-auto h-1.5 w-[28px]">
                  <path d="M0 8V5.500h1.600V8zM2.500 8V4h1.600v4zM5 8V2h1.600v6zM7.500 8V0h1.600v8zM24 1.500q0-1.500 1.500-1.500h7Q34 0 34 1.500v4Q34 7 32.500 7h-7Q24 7 24 5.500zM34.800 2.500v2.500l1-1.200z" />
                  <path d="M12 2.500c3-3 6-3 9 0M14 5c1.500-1.500 3.500-1.500 5 0" fill="none" stroke="#000" strokeWidth="1.500" /><circle cx="16.500" cy="6.800" r="1.200" />
                </svg>
              </div>
              <div className="mt-[14px] h-[93px] w-[93px] shrink-0 rounded bg-[#006eff]" />
              <h2 className="mt-3 text-[16px] leading-[22px] font-bold">Clark, Horton and Campbell</h2>
              <p className="mt-1.5 w-[152px] text-[11px] leading-4">
                Nor center money sea member exist spring. Much not long sometimes age seek final. Financial benefit throughout once section election. Career tough right single sport environmental peace civil.
              </p>
            </div>
            <div className="absolute inset-x-3 top-[318px] flex h-[50px] items-center justify-between rounded-[3px] bg-white px-3 text-[#1c2333] shadow-[0_0_14px_rgba(0,0,0,0.05)]">
              <span className="font-['Open_Sans',sans-serif] text-[13px]">born</span>
              <svg viewBox="0 0 16 12" className="h-3 w-4 text-[#757b82]" {...line} strokeWidth="1.200"><path d="M0 6h15M9.500 .8L15 6l-5.500 5.200" /></svg>
            </div>
            <span className="absolute bottom-[7px] left-1/2 h-[3px] w-[77px] -translate-x-1/2 rounded-full bg-black" />
          </div>
        </div>
      </div>
    </aside>
  );
}

function BottomBar() {
  return (
    <footer className="absolute inset-x-0 top-[3862px] flex h-[59px] items-center justify-between bg-white pr-[93px] pl-[105px] shadow-[0_-2px_8px_rgba(0,0,0,0.04)]">
      <button type="button" className="flex h-10 w-[118px] items-center justify-center gap-2 rounded-[3px] border border-[#2ac455] text-[14px] font-bold text-[#2ac455]">
        <svg viewBox="0 0 16 12" className="h-2.5 w-[15px]" {...line} strokeWidth="1.500"><path d="M1 6h15M5 1.500L1 6l4 4.500" /></svg>
        Back
      </button>
      <button type="button" className="flex h-10 w-[118px] items-center justify-center gap-2.5 rounded-[3px] bg-linear-to-br from-[#7ae098] to-[#6ed58c] text-[14px] font-bold text-white">
        Next
        <svg viewBox="0 0 16 12" className="h-3 w-4" {...line} strokeWidth="1.800"><path d="M0 6h15M10.500 1l4.500 5-4.500 5" /></svg>
      </button>
    </footer>
  );
}

export default function App() {
  return (
    <div className="relative bg-white pt-14 pb-[13px] font-['Lato',sans-serif] text-[#1c1836]">
      <div className="flex items-start justify-between bg-[#f4f8fb] pr-[93px] pb-[65px] pl-[105px]">
        <main className="w-[65.3%]">
          <h1 className="pt-4 pb-[19px] text-[19px] leading-6 font-bold text-[#121b2d]">2. Add content to your QR code</h1>
          <div className="flex flex-col gap-3">
            <DesignCard />
            <RestaurantCard />
            <MenuCard />
            <HoursCard />
            <ContactCard />
            <SocialCard />
            <FontsCard />
            <WelcomeCard />
            <Card className="pb-[21px]">
              <CardHead icon={<QrScanIcon className="h-[21px] w-[21px]" />} title="Name of the QR Code" sub="Give a name to your QR code." />
              <div className="mt-2 h-16 rounded bg-[#f7f7f7]" />
            </Card>
            <Card className="pb-3">
              <CardHead rule="none" icon={<LockIcon className="h-[23px] w-[20px]" />} title="Password" extra={<Help />} />
            </Card>
          </div>
        </main>
        <PhonePreview />
      </div>
      <TopBar />
      <BottomBar />
    </div>
  );
}
